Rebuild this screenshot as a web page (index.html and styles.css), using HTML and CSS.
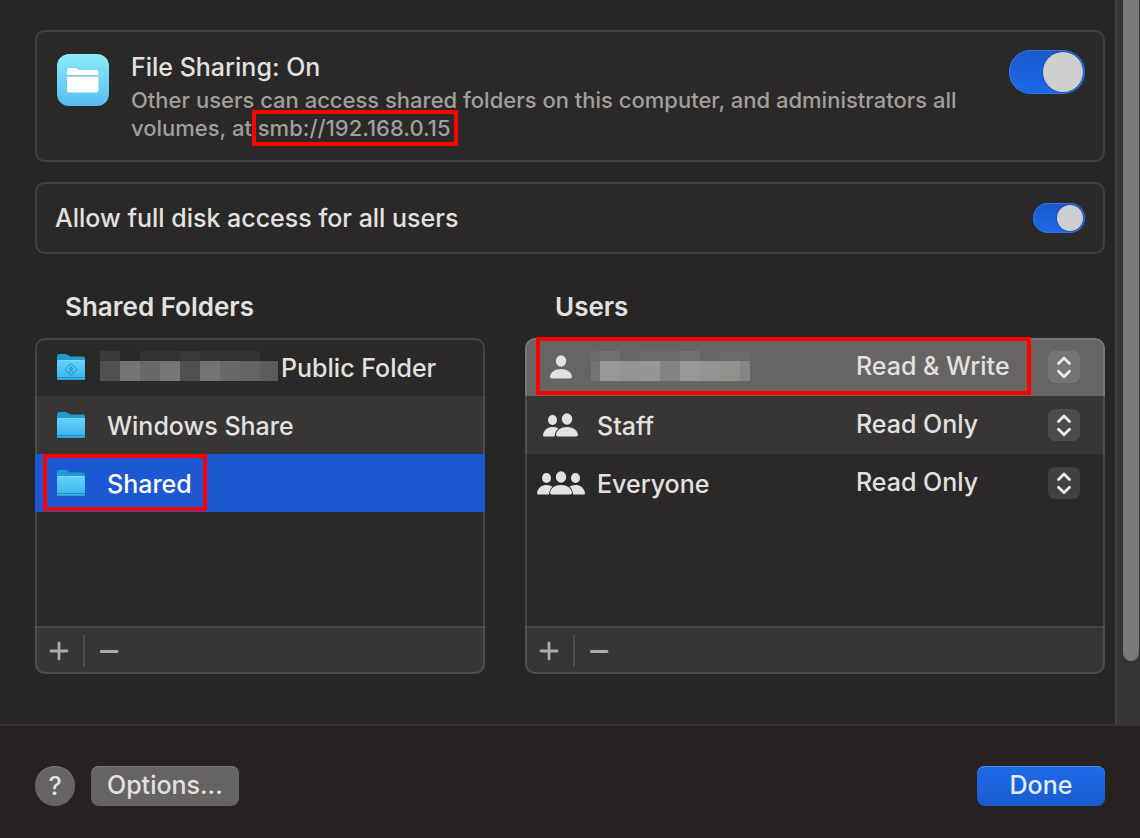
FILE: index.html
```html
<!DOCTYPE html>
<html lang="en">
<head>
<meta charset="utf-8">
<meta name="viewport" content="width=device-width, initial-scale=1">
<title>File Sharing</title>
<link rel="stylesheet" href="styles.css">
</head>
<body>
<svg class="defs" aria-hidden="true">
  <defs>
    <linearGradient id="folderFront" x1="0" y1="0" x2="0" y2="1">
      <stop offset="0" stop-color="#66d2fb"/><stop offset=".5" stop-color="#4fc3f5"/><stop offset="1" stop-color="#36aee6"/>
    </linearGradient>
    <symbol id="folder" viewBox="0 0 30 30">
      <path d="M1 4.500Q1 2 3.200 2H9.500Q10.800 2 12 3L13 3.800Q13.800 4.400 15 4.400H27Q29 4.400 29 6.500V12H1Z" fill="#1e9bd2"/>
      <path d="M1 9.500Q1 8 2.500 8H27.500Q29 8 29 9.500V26.500Q29 28 27.500 28H2.500Q1 28 1 26.500Z" fill="url(#folderFront)"/>
      <path d="M1.500 8.500H28.500" stroke="#83e1ff" stroke-opacity=".6"/>
      <path d="M1 25.500H29" stroke="#2292c6"/>
      <path d="M2 27.500H28" stroke="#2aa5dc"/>
    </symbol>
    <symbol id="person" viewBox="0 0 22 24">
      <ellipse cx="11" cy="6" rx="5.200" ry="5.800"/>
      <path d="M2 23.500Q0 23.500 0 21.500C.8 17 5 14 11 14S21.200 17 22 21.500Q22 23.500 20 23.500Z"/>
    </symbol>
    <symbol id="updown" viewBox="0 0 32 32">
      <path d="M10.500 12.500L16 7L21.500 12.500M10.500 20.200L16 25.700L21.500 20.200" fill="none" stroke="#ececeb" stroke-width="2.800" stroke-linecap="round" stroke-linejoin="round"/>
    </symbol>
    <symbol id="plus" viewBox="0 0 20 20">
      <path d="M2 10H18M10 2V18" stroke="#acabaa" stroke-width="2.800" stroke-linecap="round"/>
    </symbol>
    <symbol id="minus" viewBox="0 0 20 20">
      <path d="M1 10.500H17" stroke="#acabaa" stroke-width="2.800" stroke-linecap="round"/>
    </symbol>
  </defs>
</svg>

<div class="sheet">
  <div class="scroll">
    <main class="content">
      <section class="card service">
        <svg class="app-icon" viewBox="0 0 52 52" aria-hidden="true">
          <defs><linearGradient id="app" x1="0" y1="0" x2="0" y2="1"><stop offset="0" stop-color="#8eebfd"/><stop offset="1" stop-color="#54bdf0"/></linearGradient></defs>
          <rect width="52" height="52" rx="12" fill="url(#app)"/>
          <path d="M10 21V16.500Q10 14 12.500 14H18Q19.300 14 20.300 15L21 15.500Q21.700 16 23 16H39Q41.500 16 41.500 18.500V21Z" fill="#fff"/>
          <path d="M10 22.500H41.500V35.500Q41.500 38.500 38.500 38.500H13Q10 38.500 10 35.500Z" fill="#fff"/>
          <path d="M10 21.800H41.500" stroke="#86bfd6" stroke-width="1.200"/>
        </svg>
        <div class="service-text">
          <label class="title" for="sharing">File Sharing: On</label>
          <p class="detail">Other users can access shared folders on this computer, and administrators all volumes, at <span class="address">smb://192.168.0.15</span></p>
        </div>
        <input class="toggle toggle-large" type="checkbox" role="switch" id="sharing" checked>
      </section>

      <section class="card disk">
        <label class="title" for="disk">Allow full disk access for all users</label>
        <input class="toggle" type="checkbox" role="switch" id="disk" checked>
      </section>

      <div class="columns">
        <section class="column">
          <h2>Shared Folders</h2>
          <div class="panel">
            <ul class="folders">
              <li><button class="row masked" type="button">
                <svg class="folder" aria-hidden="true"><use href="#folder"/><path d="M15 11.500L21 17.500L15 23.500L9 17.500ZM15 14.500V18L13 21M15 18L17 20.500M13 17L15 15.500L17 17" fill="none" stroke="#2590c4"/></svg>
                <svg class="mask" width="178" height="30" shape-rendering="crispEdges" aria-hidden="true">
                  <path d="M0 0H20V10H0Z" fill="#3b3a39"/><path d="M40 0H80V10H40Z" fill="#333231"/><path d="M80 0H100V10H80Z" fill="#393837"/><path d="M100 0H160V10H100Z" fill="#333231"/>
                  <path d="M0 10H20V30H0Z" fill="#51504f"/><path d="M20 10H40V30H20Z" fill="#767475"/><path d="M40 10H60V30H40Z" fill="#6a6969"/><path d="M60 10H80V30H60Z" fill="#777576"/><path d="M80 10H100V30H80Z" fill="#50504f"/><path d="M100 10H120V30H100Z" fill="#757374"/><path d="M120 10H140V30H120Z" fill="#6a6968"/><path d="M140 10H160V30H140Z" fill="#646362"/><path d="M160 10H178V30H160Z" fill="#5d5c5b"/>
                </svg>
                <span>Public Folder</span>
              </button></li>
              <li><button class="row striped" type="button">
                <svg class="folder" aria-hidden="true"><use href="#folder"/></svg><span>Windows Share</span>
              </button></li>
              <li><button class="row selected" type="button" aria-pressed="true">
                <svg class="folder" aria-hidden="true"><use href="#folder"/></svg><span>Shared</span>
                <i class="mark mark-folder"></i>
              </button></li>
            </ul>
            <div class="tools">
              <button type="button" aria-label="Add folder"><svg><use href="#plus"/></svg></button>
              <button type="button" aria-label="Remove folder"><svg><use href="#minus"/></svg></button>
            </div>
          </div>
        </section>

        <section class="column">
          <h2>Users</h2>
          <div class="panel">
            <table class="users">
              <tbody>
                <tr class="current">
                  <td class="who"><svg width="48" height="26" aria-hidden="true"><use href="#person" x="13" y="1" width="22" height="24"/></svg></td>
                  <td class="name">
                    <svg class="mask" width="159" height="30" shape-rendering="crispEdges" aria-hidden="true">
                      <path d="M0 0H29V10H0Z" fill="#6c6b6a"/><path d="M9 0H29V10H9Z" fill="#727170"/><path d="M49 0H89V10H49Z" fill="#6c6b69"/><path d="M89 0H109V10H89Z" fill="#72716f"/><path d="M129 0H159V10H129Z" fill="#6b6a68"/>
                      <path d="M0 10H9V30H0Z" fill="#757473"/><path d="M9 10H29V30H9Z" fill="#999796"/><path d="M29 10H49V30H29Z" fill="#949292"/><path d="M49 10H69V30H49Z" fill="#989596"/><path d="M69 10H89V30H69Z" fill="#838383"/><path d="M89 10H109V30H89Z" fill="#999697"/><path d="M109 10H129V30H109Z" fill="#949293"/><path d="M129 10H149V30H129Z" fill="#91908d"/><path d="M149 10H159V30H149Z" fill="#868584"/>
                    </svg>
                    <i class="mark mark-user"></i>
                  </td>
                  <td class="access"><div class="picker">
                    <select aria-label="Access for current user"><option>Read &amp; Write</option><option>Read Only</option></select>
                    <svg aria-hidden="true"><use href="#updown"/></svg>
                  </div></td>
                </tr>
                <tr class="striped">
                  <td class="who"><svg width="48" height="26" aria-hidden="true">
                    <ellipse cx="15.500" cy="8" rx="4.500" ry="5"/><path d="M7.500 24.500Q6 24.500 6 23C7 17.500 11 15 15.500 15Q19 15 21.500 16.400Q18 19 17.500 24.500Z"/>
                    <use href="#person" x="19" y="1" width="22" height="24"/>
                  </svg></td>
                  <td class="name">Staff</td>
                  <td class="access"><div class="picker">
                    <select aria-label="Access for Staff"><option>Read Only</option><option>Read &amp; Write</option></select>
                    <svg aria-hidden="true"><use href="#updown"/></svg>
                  </div></td>
                </tr>
                <tr>
                  <td class="who"><svg width="48" height="26" aria-hidden="true">
                    <ellipse cx="9.500" cy="8" rx="4.500" ry="5"/><path d="M1.500 24.500Q0 24.500 0 23C1 17.500 5 15 9.500 15Q13 15 15.500 16.600Q12.500 19 12 24.500Z"/>
                    <ellipse cx="38.500" cy="8" rx="4.500" ry="5"/><path d="M46.500 24.500Q48 24.500 48 23C47 17.500 43 15 38.500 15Q35 15 32.500 16.600Q35.500 19 36 24.500Z"/>
                    <use href="#person" x="13" y="1" width="22" height="24"/>
                  </svg></td>
                  <td class="name">Everyone</td>
                  <td class="access"><div class="picker">
                    <select aria-label="Access for Everyone"><option>Read Only</option><option>Read &amp; Write</option></select>
                    <svg aria-hidden="true"><use href="#updown"/></svg>
                  </div></td>
                </tr>
              </tbody>
            </table>
            <div class="tools">
              <button type="button" aria-label="Add user"><svg><use href="#plus"/></svg></button>
              <button type="button" aria-label="Remove user"><svg><use href="#minus"/></svg></button>
            </div>
          </div>
        </section>
      </div>
    </main>
    <div class="track" aria-hidden="true"><div class="thumb"></div></div>
  </div>

  <footer class="actions">
    <button class="help" type="button" aria-label="Help">?</button>
    <button class="button" type="button">Options...</button>
    <button class="button primary" type="button">Done</button>
  </footer>
</div>
</body>
</html>
```

FILE: styles.css
```css
* { box-sizing: border-box; }

body {
  margin: 0;
  background: #272624;
  color: #e2e1e0;
  font: 500 25px/32px Inter, "Liberation Sans", sans-serif;
}

button, select { font: inherit; color: inherit; border: 0; margin: 0; padding: 0; background: none; }
h2, p, ul { margin: 0; padding: 0; }
ul { list-style: none; }
svg { display: block; flex: none; }
.defs { position: absolute; width: 0; height: 0; }

.sheet { display: flex; flex-direction: column; min-height: 100vh; }
.scroll { display: flex; flex: 1; }
.content { flex: 1; min-width: 0; padding: 30px 10px 50px 35px; }

.track { width: 25px; padding-left: 6px; background: #353433; border-left: 2px solid #42413f; }
.thumb { width: 16px; height: 661px; border-radius: 0 0 8px 8px; background: #7a7977; }

.card {
  display: flex;
  margin-bottom: 20px;
  padding: 18px;
  border: 2px solid #41403e;
  border-radius: 10px;
  background: #2a2928;
}
.service { gap: 22px; padding-left: 20px; }
.disk { align-items: center; justify-content: space-between; margin-bottom: 37px; }
.app-icon { width: 52px; height: 52px; margin-top: 4px; }
.service-text { flex: 1; padding-top: 1px; }
.title { display: block; }
.detail { margin-top: 3px; color: #a09f9d; font-size: 22px; line-height: 28px; }
.address { position: relative; }
.address::after {
  content: "";
  position: absolute;
  inset: -5px -8px -5px -6px;
  border: 4px solid #fe0000;
}

.toggle {
  appearance: none;
  flex: none;
  width: 52px;
  height: 30px;
  margin: 0;
  padding: 2px;
  border-radius: 22px;
  background: linear-gradient(#1b59cb, #1d68ea);
  box-shadow: inset 0 0 0 1px #2f78e4;
}
.toggle::before {
  content: "";
  display: block;
  height: 100%;
  aspect-ratio: 1;
  margin-left: auto;
  border-radius: 50%;
  background: #cfcfcf;
  box-shadow: 0 0 2px #123a86;
}
.toggle-large { width: 76px; height: 44px; }

.columns { display: grid; grid-template-columns: 45fr 58fr; gap: 40px; }
h2 { margin: 0 30px 15px; font-size: 26px; line-height: 32px; font-weight: 600; }

.panel {
  position: relative;
  display: flex;
  flex-direction: column;
  min-height: 336px;
  border-radius: 10px;
  background: #2a2928;
}
.panel::after {
  content: "";
  position: absolute;
  inset: 0;
  border: 2px solid rgba(255, 255, 255, .12);
  border-radius: 10px;
  pointer-events: none;
}

.row {
  position: relative;
  display: flex;
  align-items: center;
  gap: 21px;
  width: 100%;
  height: 58px;
  padding: 2px 21px 0;
  text-align: left;
}
.masked { gap: 14px; }
.masked span { margin-left: -11px; }
.mask { margin-top: -4px; }
.striped { background: #373634; }
.selected { z-index: 1; background: #1c58d1; color: #fff; }
.folder { width: 30px; height: 30px; margin-top: -2px; }

.mark { position: absolute; border: 4px solid #fe0000; pointer-events: none; }
.mark-folder { left: 8px; top: 0; width: 164px; height: 57px; }
.mark-user { z-index: 1; left: 11px; right: 74px; top: -1px; height: 58px; }

.users { width: 100%; border-collapse: collapse; }
.users tr { position: relative; height: 58px; }
.users td { padding: 0; }
.current td { background: #666563; }
.current td:first-child { border-top-left-radius: 10px; }
.current td:last-child { border-top-right-radius: 10px; }
.users .who { width: 72px; padding-left: 12px; }
.who svg { fill: #e2e2e2; }
.users .name { padding-top: 2px; }
.current .mask { margin: -4px 0 0 -6px; }
.access { width: 249px; }
.picker { position: relative; margin-right: 25px; }
.picker select { display: block; appearance: none; width: 100%; height: 36px; padding-bottom: 2px; cursor: pointer; }
.picker option { background: #373634; }
.picker svg {
  position: absolute;
  top: 2px;
  right: 0;
  width: 32px;
  height: 32px;
  border-radius: 7px;
  background: rgba(255, 255, 255, .11);
  pointer-events: none;
}

.tools {
  display: flex;
  align-items: center;
  height: 48px;
  margin-top: auto;
  border-top: 2px solid #454442;
  border-radius: 0 0 10px 10px;
  background: #373634;
}
.tools button { display: grid; place-items: center; width: 50px; height: 32px; }
.tools button:first-child { border-right: 2px solid #504f4d; }
.tools svg { width: 20px; height: 20px; }

.actions {
  display: flex;
  align-items: center;
  gap: 16px;
  padding: 40px 35px 32px;
  border-top: 2px solid #353130;
  background: #262221;
}
.help { width: 40px; height: 40px; border-radius: 50%; background: #666463; box-shadow: inset 0 1px #7b7978; }
.button { height: 40px; padding: 0 16px 2px; border-radius: 8px; background: #666463; box-shadow: inset 0 1px #7b7978; }
.primary { min-width: 128px; margin-left: auto; background: linear-gradient(#1d6aea, #1b5ccf); color: #e3ecfb; box-shadow: inset 0 1px #4b8af0; }
```
